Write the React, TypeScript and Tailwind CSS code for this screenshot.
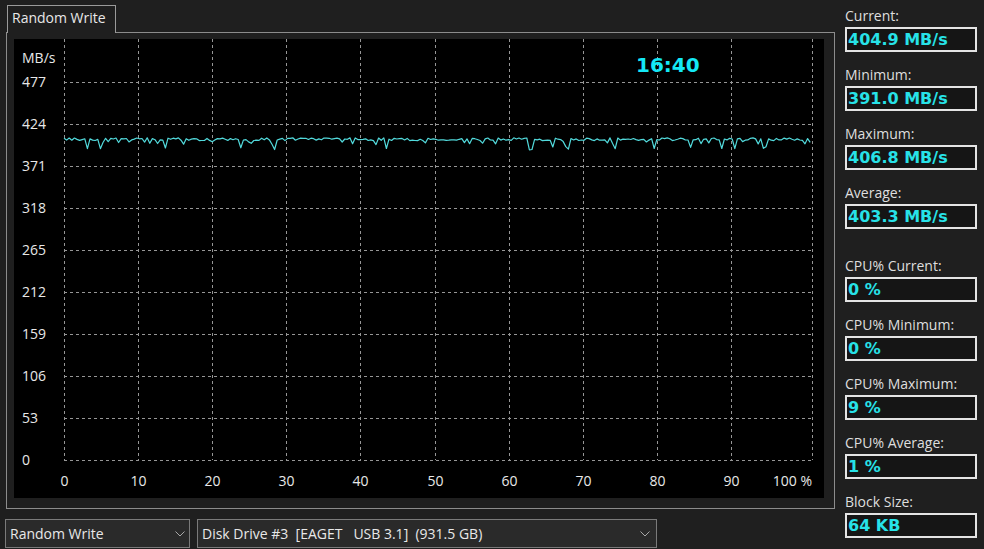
import React from "react";

function makeData(): string {
  let s = 424242;
  const rnd = () => {
    s = (s * 1103515245 + 12345) & 0x7fffffff;
    return s / 0x7fffffff;
  };
  const pts: string[] = [];
  let x = 50;
  while (x <= 797) {
    let v = 404.8 + (rnd() - 0.5) * 3.6;
    const r = rnd();
    if (r < 0.14) v = 398 + rnd() * 4;
    else if (r < 0.2) v = 391.5 + rnd() * 4;
    const y = 421 - (v * 378) / 477;
    pts.push(`${x.toFixed(1)},${y.toFixed(1)}`);
    x += 2.6;
  }
  return pts.join(" ");
}

const DATA = makeData();

const yVals = [477, 424, 371, 318, 265, 212, 159, 106, 53, 0];
const xVals = [0, 10, 20, 30, 40, 50, 60, 70, 80, 90];

function Chart() {
  const vx = xVals.map((_, k) => Math.round(50 + 74.1 * k) + 0.5);
  return (
    <svg width="810" height="459" viewBox="0 0 810 459" className="block">
      {vx.map((x, i) => (
        <line key={"v" + i} x1={x} y1={0} x2={x} y2={421} stroke="#969696" strokeWidth="1" strokeDasharray="3 3" shapeRendering="crispEdges" />
      ))}
      <line x1={798.5} y1={0} x2={798.5} y2={421} stroke="#969696" strokeWidth="1" strokeDasharray="3 3" shapeRendering="crispEdges" />
      {yVals.map((_, k) => (
        <line key={"h" + k} x1={50} y1={43 + 42 * k + 0.5} x2={799} y2={43 + 42 * k + 0.5} stroke="#969696" strokeWidth="1" strokeDasharray="3 3" shapeRendering="crispEdges" />
      ))}
      <polyline points={DATA} fill="none" stroke="#52dadc" strokeWidth="1.2" strokeLinejoin="round" />
      <text x={8} y={24} fill="#e8e8e8" fontSize="14" fontFamily="'Open Sans', sans-serif">MB/s</text>
      {yVals.map((v, k) => (
        <text key={"yl" + k} x={8} y={43 + 42 * k + 5} fill="#e8e8e8" fontSize="14" fontFamily="'Open Sans', sans-serif">
          {v}
        </text>
      ))}
      {xVals.map((v, k) => (
        <text key={"xl" + k} x={vx[k]} y={447} fill="#e8e8e8" fontSize="14" textAnchor="middle" fontFamily="'Open Sans', sans-serif">
          {v}
        </text>
      ))}
      <text x={798} y={447} fill="#e8e8e8" fontSize="14" textAnchor="end" fontFamily="'Open Sans', sans-serif">100 %</text>
      <text x={622} y={33} fill="#14e8f6" fontSize="20" fontWeight="bold" fontFamily="'DejaVu Sans', Verdana, sans-serif">16:40</text>
    </svg>
  );
}

function Chevron() {
  return (
    <svg width="10" height="6" viewBox="0 0 10 6" className="block">
      <polyline points="0.5,0.5 5,5 9.5,0.5" fill="none" stroke="#a8a8a8" strokeWidth="1" />
    </svg>
  );
}

function Stat({ label, value, first, extra }: { label: string; value: string; first?: boolean; extra?: boolean }) {
  const mt = first ? "mt-0" : extra ? "mt-[27px]" : "mt-[13px]";
  return (
    <div className={mt}>
      <div className="h-[20px] leading-[20px] text-[14px] text-[#dedede] whitespace-nowrap">{label}</div>
      <div className="mt-[1px] h-[25px] border-2 border-[#e4e4e4] bg-[#151515] pl-[1px] font-['DejaVu_Sans',Verdana,sans-serif] font-bold text-[16px] leading-[21px] text-[#27e2e8] whitespace-nowrap overflow-hidden">
        {value}
      </div>
    </div>
  );
}

export default function App() {
  return (
    <div className="w-[984px] h-[549px] bg-[#1f1f1f] flex overflow-hidden font-['Open_Sans',sans-serif] text-[14px] text-[#e8e8e8]">
      <div className="w-[845px] shrink-0 flex flex-col pl-[6px] pt-[5px]">
        <div className="relative z-10 ml-[1px] -mb-[1px] w-[109px] h-[28px] border border-b-0 border-[#9a9a9a] bg-[#1f1f1f] pl-[4px] leading-[24px] whitespace-nowrap">
          Random Write
        </div>
        <div className="w-[829px] h-[477px] border border-[#8c8c8c] pt-[6px] pl-[7px]">
          <div className="w-[810px] h-[459px] bg-black">
            <Chart />
          </div>
        </div>
        <div className="flex gap-[7px] mt-[10px] -ml-[1px]">
          <div className="w-[185px] h-[29px] border border-[#7a7a7a] bg-[#2a2a2a] flex items-center justify-between pl-[4px] pr-[4px]">
            <span className="leading-[27px] whitespace-nowrap">Random Write</span>
            <Chevron />
          </div>
          <div className="w-[460px] h-[29px] border border-[#7a7a7a] bg-[#2a2a2a] flex items-center justify-between pl-[4px] pr-[6px]">
            <span className="leading-[27px] whitespace-pre">Disk Drive #3  [EAGET   USB 3.1]  (931.5 GB)</span>
            <Chevron />
          </div>
        </div>
      </div>
      <div className="w-[132px] shrink-0 pt-[6px] flex flex-col">
        <Stat first label="Current:" value="404.9 MB/s" />
        <Stat label="Minimum:" value="391.0 MB/s" />
        <Stat label="Maximum:" value="406.8 MB/s" />
        <Stat label="Average:" value="403.3 MB/s" />
        <Stat extra label="CPU% Current:" value="0 %" />
        <Stat label="CPU% Minimum:" value="0 %" />
        <Stat label="CPU% Maximum:" value="9 %" />
        <Stat label="CPU% Average:" value="1 %" />
        <Stat label="Block Size:" value="64 KB" />
      </div>
    </div>
  );
}
